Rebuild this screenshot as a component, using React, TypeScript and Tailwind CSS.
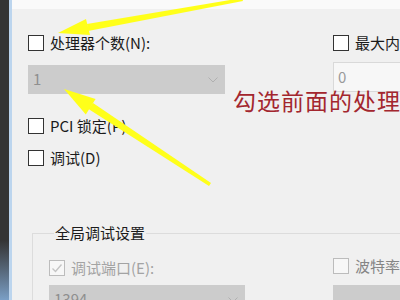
import React from 'react';

type BoxProps = { checked?: boolean; disabled?: boolean };

const Checkbox = ({ checked, disabled }: BoxProps) => (
  <span
    className={`flex h-4 w-4 shrink-0 items-center justify-center border ${
      disabled ? 'border-[#bcbcbc] bg-[#f7f7f7]' : 'border-[#333333] bg-white'
    }`}
  >
    {checked && (
      <svg width="12" height="12" viewBox="0 0 12 12">
        <path d="M1.5 6.5 L4.5 9.5 L10.5 2.5" fill="none" stroke="#c4c4c4" strokeWidth="1.4" />
      </svg>
    )}
  </span>
);

const Chevron = () => (
  <svg width="10" height="6" viewBox="0 0 10 6">
    <path d="M0.5 0.5 L5 5 L9.5 0.5" fill="none" stroke="#b0b0b0" strokeWidth="1" />
  </svg>
);

const Select = ({ value, className }: { value: string; className: string }) => (
  <div className={`flex shrink-0 items-center justify-between bg-[#cccccc] pl-[5px] pr-[7px] text-[15px] text-[#8f8f8f] ${className}`}>
    <span>{value}</span>
    <Chevron />
  </div>
);

const Row = ({ label, checked, disabled, tone }: BoxProps & { label: string; tone?: string }) => (
  <label className="flex h-4 shrink-0 items-center gap-[6px] whitespace-nowrap text-[15px] leading-4">
    <Checkbox checked={checked} disabled={disabled} />
    <span className={tone ?? 'text-[#1b1b1b]'}>{label}</span>
  </label>
);

const App = () => {
  return (
    <div className="relative flex h-[300px] w-[400px] overflow-hidden font-['Segoe_UI','Noto_Sans_CJK_SC',sans-serif]">
      <div className="w-[9px] shrink-0 bg-linear-to-b from-[#343434] from-80% to-[#7a9fc6]" />
      <div className="w-[3px] shrink-0 bg-[#bcd5ee]" />
      <div className="flex min-w-0 flex-1 flex-col overflow-hidden bg-[#f0f0f0]">
        <div className="h-[9px] shrink-0 bg-[#fafafa]" />

        <div className="flex shrink-0 pl-4 pt-[26px]">
          <div className="flex w-[305px] shrink-0 flex-col">
            <Row label="处理器个数(N):" />
            <Select value="1" className="mt-[14px] h-[29px] w-[197px]" />
            <div className="mt-[24px]">
              <Row label="PCI 锁定(P)" />
            </div>
            <div className="mt-4">
              <Row label="调试(D)" />
            </div>
          </div>
          <div className="flex shrink-0 flex-col">
            <Row label="最大内存(M):" />
            <div className="mt-[11px] h-[30px] w-[120px] border border-[#d9d9d9] bg-[#f7f7f7] pl-[4px] text-[15px] leading-[28px] text-[#9a9a9a]">
              0
            </div>
          </div>
        </div>

        <fieldset className="ml-5 mt-[57px] w-[420px] shrink-0 border-l border-t border-[#dcdcdc] pl-4">
          <legend className="ml-[5px] px-px text-[15px] leading-5 text-[#1b1b1b]">全局调试设置</legend>
          <div className="mt-[17px] grid grid-cols-[284px_1fr]">
            <div className="flex flex-col">
              <Row label="调试端口(E):" checked disabled tone="text-[#a3a3a3]" />
              <Select value="1394" className="mt-[9px] h-[29px] w-[196px]" />
            </div>
            <div className="-mt-[2px] flex flex-col">
              <Row label="波特率(B):" disabled tone="text-[#858585]" />
              <div className="mt-[11px] h-[29px] bg-[#cccccc]" />
            </div>
          </div>
        </fieldset>
      </div>

      <div className="absolute left-[233px] top-[89px] whitespace-nowrap font-['Noto_Sans_CJK_SC',serif] text-[23px] leading-[23px] tracking-[1px] text-[#a3262e]">
        勾选前面的处理器
      </div>

      <svg className="pointer-events-none absolute left-0 top-0" width="400" height="300" viewBox="0 0 400 300">
        <g fill="#ffff1a">
          <polygon points="58,33 86,19 90,35" />
          <polygon points="88,31 87,24 242,-2 243,1" />
          <polygon points="64,89 95.6,99 85.8,114.5" />
          <polygon points="93,103 88.5,109 209,186 211,183" />
        </g>
      </svg>
    </div>
  );
};

export default App;
